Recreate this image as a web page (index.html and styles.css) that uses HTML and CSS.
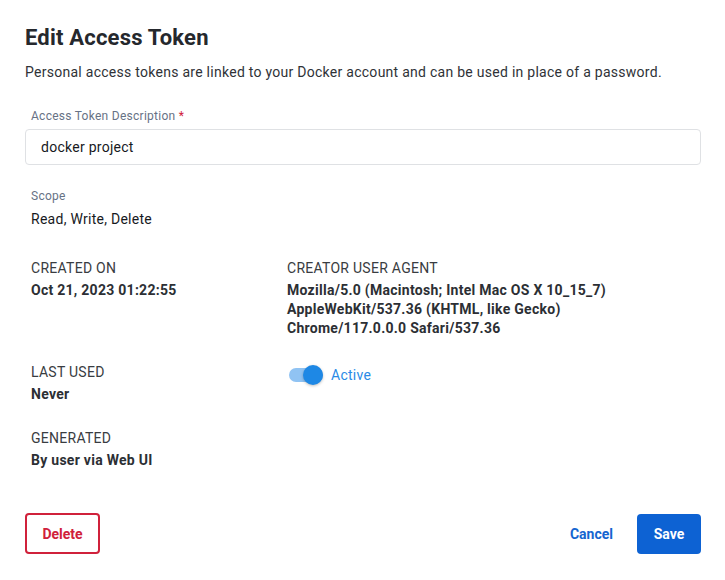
FILE: index.html
```html
<!DOCTYPE html>
<html>
<head>
<meta charset="utf-8">
<link rel="stylesheet" href="styles.css">
</head>
<body>
<div class="dialog">
  <h1 class="title">Edit Access Token</h1>
  <p class="subtitle">Personal access tokens are linked to your Docker account and can be used in place of a password.</p>

  <div class="field">
    <label class="field-label">Access Token Description <span class="req">*</span></label>
    <div class="input">docker project</div>
  </div>

  <div class="scope">
    <div class="scope-label">Scope</div>
    <div class="scope-value">Read, Write, Delete</div>
  </div>

  <div class="details">
    <div class="item">
      <div class="item-label">CREATED ON</div>
      <div class="item-value">Oct 21, 2023 01:22:55</div>
    </div>
    <div class="item">
      <div class="item-label">CREATOR USER AGENT</div>
      <div class="item-value">Mozilla/5.0 (Macintosh; Intel Mac OS X 10_15_7)<br>AppleWebKit/537.36 (KHTML, like Gecko)<br>Chrome/117.0.0.0 Safari/537.36</div>
    </div>
    <div class="item">
      <div class="item-label">LAST USED</div>
      <div class="item-value">Never</div>
    </div>
    <div class="item toggle-item">
      <span class="switch"><span class="track"></span><span class="thumb"></span></span>
      <span class="toggle-text">Active</span>
    </div>
    <div class="item">
      <div class="item-label">GENERATED</div>
      <div class="item-value">By user via Web UI</div>
    </div>
  </div>

  <div class="actions">
    <button class="btn btn-delete">Delete</button>
    <div class="right">
      <button class="btn btn-cancel">Cancel</button>
      <button class="btn btn-save">Save</button>
    </div>
  </div>
</div>
</body>
</html>
```

FILE: styles.css
```css
* { box-sizing: border-box; }
html, body { margin: 0; padding: 0; background: #fff; }
body {
  font-family: Roboto, "Liberation Sans", sans-serif;
  color: #17191e;
  letter-spacing: 0.27px;
}
.dialog {
  padding: 24px 24px 0 25px;
}
.title {
  margin: 0;
  font-size: 22px;
  line-height: 28px;
  font-weight: 700;
  letter-spacing: 0.2px;
  color: #25282d;
}
.subtitle {
  margin: 10px 0 0;
  font-size: 14px;
  line-height: 20px;
  color: #2f3237;
}
.field { margin-top: 26px; }
.field-label {
  display: block;
  margin-left: 6px;
  font-size: 12px;
  line-height: 16px;
  color: #677285;
}
.req { color: #d0213b; }
.input {
  margin-top: 5px;
  height: 36px;
  border: 1px solid #dfe1e4;
  border-radius: 4px;
  padding: 0 15px;
  display: flex;
  align-items: center;
  font-size: 14px;
  color: #17191e;
}
.scope { margin-top: 23px; padding-left: 6px; }
.scope-label {
  font-size: 12px;
  line-height: 16px;
  color: #677285;
}
.scope-value {
  margin-top: 5px;
  font-size: 14px;
  line-height: 20px;
}
.details {
  margin-top: 29px;
  padding-left: 6px;
  display: grid;
  grid-template-columns: 256px 1fr;
  row-gap: 24px;
}
.item-label {
  font-size: 14px;
  line-height: 20px;
  color: #393c41;
}
.item-value {
  margin-top: 3px;
  font-size: 14px;
  line-height: 19px;
  font-weight: 700;
  color: #2c2f34;
}
.toggle-item {
  display: flex;
  align-items: center;
  height: 26px;
}
.switch {
  position: relative;
  width: 36px;
  height: 20px;
  margin-left: 2px;
  display: inline-block;
}
.track {
  position: absolute;
  left: 0;
  top: 3px;
  width: 34px;
  height: 14px;
  border-radius: 7px;
  background: #90c3f3;
}
.thumb {
  position: absolute;
  left: 14px;
  top: 0;
  width: 20px;
  height: 20px;
  border-radius: 50%;
  background: #1e88e5;
  box-shadow: 0 1px 3px rgba(0,0,0,0.25);
}
.toggle-text {
  margin-left: 6px;
  font-size: 14px;
  color: #2a8ae6;
}
.actions {
  margin-top: 43px;
  display: flex;
  justify-content: space-between;
  align-items: center;
}
.right { display: flex; align-items: center; gap: 12px; }
.btn {
  font-family: Roboto, "Liberation Sans", sans-serif;
  font-size: 14px;
  font-weight: 700;
  border-radius: 4px;
  cursor: pointer;
}
.btn-delete {
  height: 41px;
  width: 75px;
  background: #fff;
  border: 2px solid #d0213b;
  color: #d0213b;
}
.btn-cancel {
  height: 40px;
  padding: 0 12px;
  background: none;
  border: none;
  color: #1565d0;
}
.btn-save {
  height: 40px;
  width: 64px;
  background: #0d62d3;
  border: none;
  color: #fff;
}
```
